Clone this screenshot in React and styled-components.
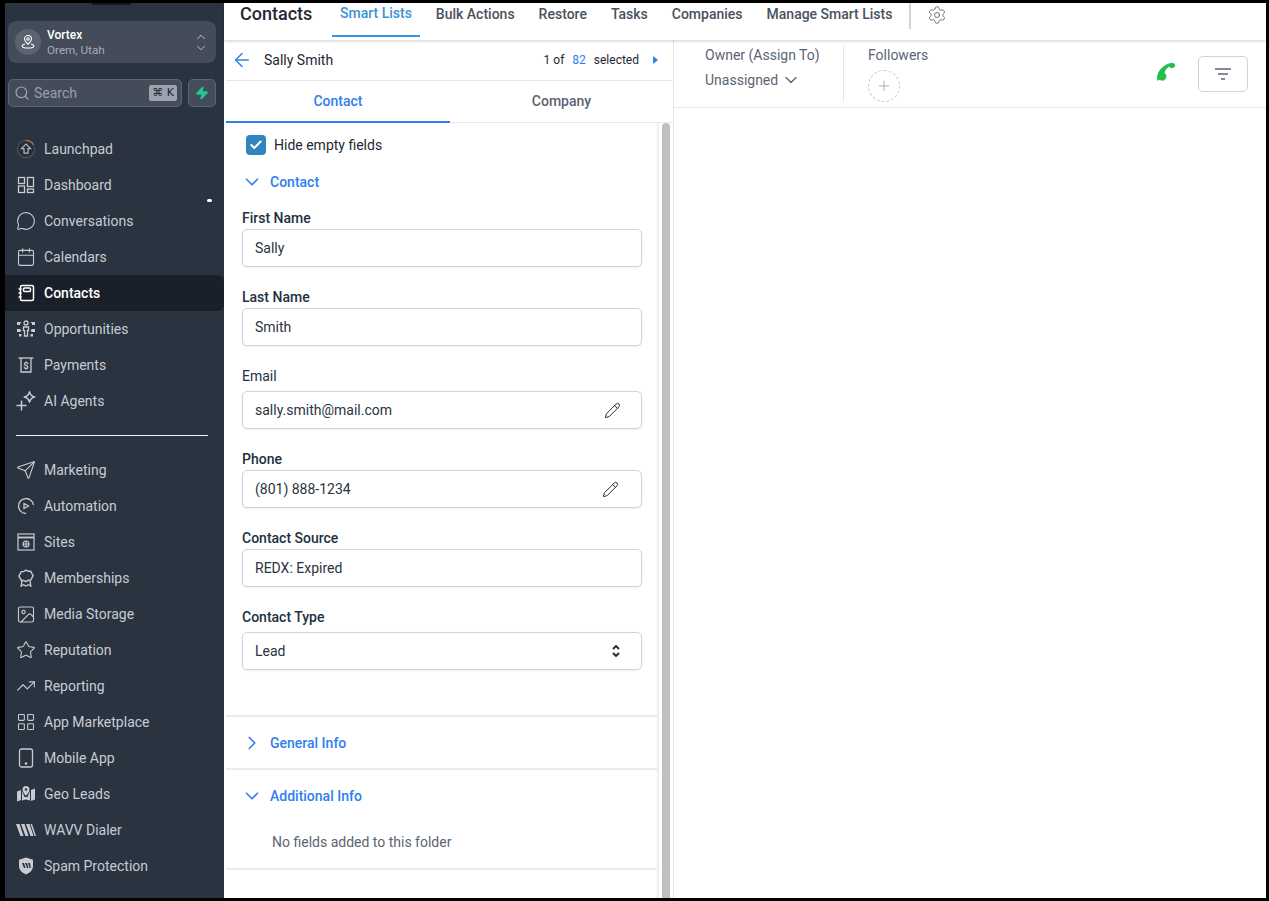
import styled, {createGlobalStyle} from "styled-components";
import {
    ArrowLeft,
    Calendar,
    Check,
    ChevronDown,
    ChevronRight,
    ChevronUp,
    Image,
    LayoutGrid,
    MessageCircle,
    Pencil,
    Plus,
    Search,
    Send,
    Settings,
    Star,
    TrendingUp,
    Zap
} from "lucide-react";

const GlobalStyle = createGlobalStyle`
    html, body {
        margin: 0;
        background: #000;
    }

    * {
        box-sizing: border-box;
    }
`;

const Frame = styled.div`
    width: 1269px;
    height: 901px;
    padding: 3px 3px 3px 5px;
    display: flex;
    overflow: hidden;
    background: #000;
    font-family: Roboto, "Liberation Sans", sans-serif;
`;

const Sidebar = styled.aside`
    position: relative;
    width: 219px;
    flex-shrink: 0;
    background: #2a3340;
    padding-top: 18px;
    color: #c8ccd2;
`;

const Notch = styled.div`
    position: absolute;
    top: 0;
    left: 87px;
    width: 39px;
    height: 2px;
    background: #14181f;
`;

const Dot = styled.div`
    position: absolute;
    top: 196px;
    left: 202px;
    width: 5px;
    height: 3px;
    border-radius: 2px;
    background: #fff;
`;

const LocationCard = styled.div`
    margin: 0 8px 0 3px;
    height: 42px;
    border-radius: 8px;
    background: #444c5a;
    display: flex;
    align-items: center;
    padding: 0 7px;
`;

const LocationAvatar = styled.div`
    width: 26px;
    height: 26px;
    border-radius: 50%;
    background: #5b6370;
    display: flex;
    align-items: center;
    justify-content: center;
    color: #fff;
    margin-right: 6px;
`;

const LocationText = styled.div`
    flex-grow: 1;
    line-height: 15px;
    padding-top: 2px;
`;

const LocationName = styled.div`
    font-size: 12px;
    font-weight: 500;
    color: #fff;
`;

const LocationCity = styled.div`
    font-size: 11.7px;
    color: #a5abb4;
`;

const Stepper = styled.div`
    display: flex;
    flex-direction: column;
    color: #cdd1d6;
    margin-right: 1px;

    svg + svg {
        margin-top: -3px;
    }
`;

const SearchRow = styled.div`
    display: flex;
    gap: 6px;
    margin: 16px 8px 0 3px;
    height: 28px;
`;

const SearchBox = styled.div`
    flex-grow: 1;
    display: flex;
    align-items: center;
    padding: 0 4px 0 5px;
    border-radius: 5px;
    border: 1px solid #5c6472;
    background: #444c5a;
    color: #a5abb4;
    font-size: 14px;
`;

const SearchLabel = styled.span`
    flex-grow: 1;
    margin-left: 4px;
    color: #98a0aa;
`;

const Shortcut = styled.span`
    background: #9ca3af;
    color: #1f2631;
    border-radius: 2px;
    font-size: 11px;
    font-family: "DejaVu Sans", sans-serif;
    padding: 1px 3px;
    line-height: 14px;
`;

const BoltButton = styled.div`
    width: 28px;
    border-radius: 5px;
    border: 1px solid #5c6472;
    background: #444c5a;
    display: flex;
    align-items: center;
    justify-content: center;
    color: #25c48d;
`;

const NavGroup = styled.nav`
    display: flex;
    flex-direction: column;
    margin-top: ${p => p.$top}px;
`;

const NavItem = styled.div`
    height: 36px;
    display: flex;
    align-items: center;
    padding-left: 11px;
    font-size: 14px;
    font-weight: ${p => p.$active ? 500 : 400};
    border-top-right-radius: 6px;
    border-bottom-right-radius: 6px;
    background: ${p => p.$active ? "#1a2029" : "transparent"};
    color: ${p => p.$active ? "#fff" : "#c8ccd2"};
`;

const NavIcon = styled.span`
    width: 20px;
    height: 20px;
    margin-right: 8px;
    display: flex;
    align-items: center;
    justify-content: center;
`;

const NavRule = styled.div`
    height: 1px;
    margin: 16px 16px 16px 11px;
    background: #f1f2f4;
`;

const Main = styled.main`
    flex-grow: 1;
    min-width: 0;
    background: #fff;
    display: flex;
    flex-direction: column;
`;

const TopBar = styled.header`
    height: 37px;
    flex-shrink: 0;
    display: flex;
    align-items: flex-start;
    padding-left: 16px;
    box-shadow: 0 1px 3px rgba(0, 0, 0, 0.2);
    position: relative;
`;

const PageTitle = styled.h1`
    margin: 0 20px 0 0;
    width: 72px;
    font-size: 18px;
    line-height: 21px;
    font-weight: 500;
    color: #1f2733;
`;

const TopTabs = styled.div`
    display: flex;
    gap: 8px;
`;

const TopTab = styled.div`
    height: 34px;
    padding: ${p => p.$active ? "1px" : "2px"} 8px 0;
    font-size: 14px;
    line-height: 18px;
    font-weight: 500;
    white-space: nowrap;
    color: ${p => p.$active ? "#3b93d8" : "#4a525e"};
    border-bottom: 2px solid ${p => p.$active ? "#3b93d8" : "transparent"};
`;

const TopDivider = styled.div`
    width: 2px;
    height: 26px;
    margin: 0 16px 0 9px;
    background: #d3d5d8;
`;

const GearWrap = styled.div`
    margin-top: 2px;
    color: #5f6875;
`;

const Columns = styled.div`
    flex-grow: 1;
    min-height: 0;
    display: flex;
`;

const ContactPanel = styled.section`
    width: 450px;
    flex-shrink: 0;
    display: flex;
    flex-direction: column;
    border-right: 1px solid #e4e7ec;
    padding-left: 2px;
`;

const RecordBar = styled.div`
    height: 41px;
    flex-shrink: 0;
    display: flex;
    align-items: center;
    padding: 0 15px 0 5px;
    border-bottom: 1px solid #e6e8ec;
`;

const RecordName = styled.span`
    margin-left: 11px;
    flex-grow: 1;
    font-size: 14px;
    color: #1f2733;
`;

const Counter = styled.span`
    font-size: 12px;
    color: #1f2733;
`;

const CounterValue = styled.span`
    color: #2f80ed;
    margin: 0 8px;
`;

const NextArrow = styled.span`
    margin-left: 14px;
    width: 0;
    height: 0;
    border-left: 5px solid #2f80ed;
    border-top: 4px solid transparent;
    border-bottom: 4px solid transparent;
`;

const PanelTabs = styled.div`
    height: 42px;
    flex-shrink: 0;
    display: grid;
    grid-template-columns: 224px 1fr;
    border-bottom: 1px solid #e6e8ec;
`;

const PanelTab = styled.div`
    height: 42px;
    display: flex;
    align-items: center;
    justify-content: center;
    font-size: 14px;
    font-weight: 500;
    color: ${p => p.$active ? "#2f80ed" : "#5b6472"};
    border-bottom: 2px solid ${p => p.$active ? "#2f80ed" : "transparent"};
`;

const PanelBody = styled.div`
    flex-grow: 1;
    min-height: 0;
    display: flex;
`;

const FieldsColumn = styled.div`
    width: 433px;
    flex-shrink: 0;
    border-right: 2px solid #eceef1;
`;

const ScrollTrack = styled.div`
    margin-left: 3px;
    width: 8px;
    background: #bfbfbf;
    border-radius: 4px 4px 0 0;
`;

const HideRow = styled.label`
    display: flex;
    align-items: center;
    margin: 12px 0 0 20px;
    height: 20px;
    font-size: 14px;
    color: #1f2733;
`;

const CheckBox = styled.span`
    width: 20px;
    height: 20px;
    margin-right: 8px;
    border-radius: 4px;
    background: #3184bd;
    color: #fff;
    display: flex;
    align-items: center;
    justify-content: center;
`;

const SectionHead = styled.div`
    height: 20px;
    display: flex;
    align-items: center;
    padding-left: 15px;
    font-size: 14px;
    font-weight: 500;
    color: #2f80ed;

    svg {
        margin-right: 7px;
    }
`;

const ContactHead = styled(SectionHead)`
    margin-top: 17px;
`;

const Fields = styled.div`
    padding: 0 15px 0 16px;
    margin-top: 17px;
    height: 508px;
    border-bottom: 2px solid #e9ebee;
`;

const Field = styled.div`
    margin-bottom: 21px;
`;

const FieldLabel = styled.div`
    font-size: 14px;
    line-height: 18px;
    font-weight: ${p => p.$plain ? 400 : 500};
    color: #22313f;
    margin-bottom: ${p => p.$roomy ? "6px" : "2px"};
`;

const InputBox = styled.div`
    height: 38px;
    display: flex;
    align-items: center;
    justify-content: space-between;
    padding: 0 ${p => p.$iconRight || 20}px 0 12px;
    background: #fff;
    border: 1px solid #cfd4dc;
    border-radius: 5px;
    box-shadow: 0 1px 2px rgba(16, 24, 40, 0.08);
    font-size: 14px;
    color: #2b3440;
`;

const Section = styled.div`
    padding: 16px 0;
    height: ${p => p.$height}px;
    border-bottom: 2px solid #e9ebee;
`;

const EmptyNote = styled.div`
    margin: 27px 0 0 46px;
    font-size: 14px;
    line-height: 18px;
    color: #5b6570;
`;

const OwnerPanel = styled.section`
    flex-grow: 1;
    min-width: 0;
`;

const OwnerBar = styled.div`
    height: 68px;
    display: flex;
    padding-left: 31px;
    border-bottom: 1px solid #e6e8ec;
    color: #5b6472;
    font-size: 14px;
`;

const OwnerBlock = styled.div`
    width: 139px;
    margin: 5px 24px 5px 0;
    border-right: 1px solid #e4e7ec;
    line-height: 18px;
    padding-top: 1px;
`;

const OwnerValue = styled.div`
    display: flex;
    align-items: center;
    gap: 3px;
    margin-top: 6px;
`;

const FollowerBlock = styled.div`
    flex-grow: 1;
    padding-top: 6px;
    line-height: 18px;
`;

const AddFollower = styled.div`
    width: 32px;
    height: 32px;
    margin-top: 6px;
    border-radius: 50%;
    border: 1px dashed #c5cad2;
    display: flex;
    align-items: center;
    justify-content: center;
    color: #98a2b3;
`;

const CallIcon = styled.div`
    margin: 21px 20px 0 0;
    height: 22px;
`;

const FilterButton = styled.div`
    width: 50px;
    height: 36px;
    margin: 16px 18px 0 0;
    border: 1px solid #cfd4dc;
    border-radius: 5px;
    display: flex;
    align-items: center;
    justify-content: center;
`;

const PinIcon = () => (
    <svg width="16" height="16" viewBox="0 0 16 16" fill="none" stroke="currentColor" strokeWidth="1.1">
        <path d="M8 1.500a3.500 3.500 0 0 1 3.500 3.500c0 2.200-2 3.700-3.500 5.200-1.500-1.500-3.500-3-3.500-5.200A3.500 3.500 0 0 1 8 1.500z"/>
        <circle cx="8" cy="5" r="1.200"/>
        <path d="M5 10c-1.600.4-2.800 1.100-2.800 1.900 0 1 2.500 2.100 5.800 2.100s5.800-1.100 5.800-2.100c0-.8-1.200-1.500-2.800-1.900"/>
    </svg>
);

const LaunchIcon = () => (
    <svg width="22" height="22" viewBox="0 0 22 22" fill="none" strokeWidth="1.3">
        <circle cx="11" cy="11" r="9.500" stroke="#4b5563" fill="#262e3a"/>
        <path d="M11 1.500a9.500 9.500 0 0 1 8.200 4.700" stroke="#c96f35" strokeWidth="1.500"/>
        <path d="M11 5.500l5 5h-2.800v5H8.800v-5H6z" stroke="#b4b9c1"/>
    </svg>
);

const DashboardIcon = () => (
    <svg width="18" height="18" viewBox="0 0 18 18" fill="none" stroke="currentColor" strokeWidth="1.300">
        <rect x="1.500" y="1.500" width="6" height="6"/>
        <rect x="10.500" y="1.500" width="6" height="9"/>
        <rect x="1.500" y="10" width="6" height="6.500"/>
        <rect x="10.500" y="13" width="6" height="3.500"/>
    </svg>
);

const ContactsIcon = () => (
    <svg width="18" height="18" viewBox="0 0 18 18" fill="none" stroke="currentColor" strokeWidth="1.500">
        <rect x="3.500" y="1.500" width="13" height="15" rx="1.500"/>
        <rect x="6.500" y="4" width="7" height="3.500" rx="1"/>
        <path d="M1.500 5h3M1.500 9h3M1.500 13h3"/>
    </svg>
);

const OpportunitiesIcon = () => (
    <svg width="20" height="18" viewBox="0 0 20 18" fill="currentColor">
        <circle cx="10" cy="3" r="2" fill="none" stroke="currentColor" strokeWidth="1.300"/>
        <path d="M7.500 7h5v3.500h-1V16h-3v-5.500h-1z" fill="none" stroke="currentColor" strokeWidth="1.300"/>
        <path d="M1 2h4.500L4 3.500v1.500H1zM19 2h-4.500L16 3.500v1.500h3z"/>
        <path d="M1 9h3l1.500 1.500L4 12H1zM19 9h-3l-1.500 1.500L16 12h3z"/>
        <path d="M3 14h2.500v2.500H3zM14.500 14H17v2.500h-2.500z"/>
    </svg>
);

const PaymentsIcon = () => (
    <svg width="18" height="18" viewBox="0 0 18 18" fill="none" stroke="currentColor" strokeWidth="1.300">
        <path d="M1.500 2h15"/>
        <path d="M4 2v14h10V2"/>
        <text x="9" y="12.500" fontSize="9.500" fontWeight="700" textAnchor="middle" fill="currentColor" stroke="none">$</text>
    </svg>
);

const AgentsIcon = () => (
    <svg width="20" height="20" viewBox="0 0 20 20" fill="none" stroke="currentColor" strokeWidth="1.500">
        <path d="M13.500 .8c.7 3 2 4.500 5.200 5.200-3.200.7-4.500 2.200-5.200 5.200-.7-3-2-4.500-5.200-5.200 3.200-.7 4.500-2.200 5.200-5.200z" strokeLinejoin="round"/>
        <path d="M5.500 9.500v10M.5 14.500h10"/>
    </svg>
);

const AutomationIcon = () => (
    <svg width="18" height="18" viewBox="0 0 18 18" fill="none" stroke="currentColor" strokeWidth="1.300">
        <path d="M16.500 8A7.500 7.500 0 1 0 9 16.500"/>
        <path d="M7 6.500l4.500 2.500L7 11.500z"/>
    </svg>
);

const SitesIcon = () => (
    <svg width="18" height="18" viewBox="0 0 18 18" fill="none" stroke="currentColor" strokeWidth="1.200">
        <rect x="1" y="1" width="16" height="16"/>
        <path d="M1 4.500h16" strokeWidth="1.800"/>
        <circle cx="9" cy="11" r="3"/>
        <path d="M6 11h6M9 8v6"/>
    </svg>
);

const RibbonIcon = () => (
    <svg width="18" height="18" viewBox="0 0 18 18" fill="none" stroke="currentColor" strokeWidth="1.400">
        <path d="M9 1l2.200 1.200 2.500.1 1.200 2.200 1.200 2.200-1.200 2.200-1.200 2.200-2.500.1L9 12.700l-2.200-1.200-2.500-.1-1.200-2.200-1.200-2.200 1.200-2.200 1.200-2.200 2.500-.1z"/>
        <path d="M5 12l-.8 5 2.400-1.300L9 17l2.400-1.300 2.400 1.300-.8-5"/>
    </svg>
);

const PhoneFrameIcon = () => (
    <svg width="16" height="20" viewBox="0 0 16 20" fill="none" stroke="currentColor" strokeWidth="1.300">
        <rect x="1.500" y="1" width="13" height="18" rx="2"/>
        <circle cx="8" cy="15.500" r=".7" fill="currentColor"/>
    </svg>
);

const GeoIcon = () => (
    <svg width="18" height="16" viewBox="0 0 18 16" fill="currentColor">
        <path d="M0 5.500l4-1.500v10l-4 1.500zM14 4l4-1.500v11L14 15z"/>
        <path d="M5 5l2.500 6h3L13 5v9.500l-4-1-4 1z"/>
        <path fillRule="evenodd" d="M9 0a3.500 3.500 0 0 1 3.500 3.500C12.500 6 9 10 9 10S5.500 6 5.500 3.500A3.500 3.500 0 0 1 9 0zm0 2.300a1.200 1.200 0 1 0 0 2.400 1.200 1.200 0 0 0 0-2.400z"/>
    </svg>
);

const WavvIcon = () => (
    <svg width="20" height="12" viewBox="0 0 20 12" fill="currentColor">
        <path d="M0 0h3.500l4 12H4.500zM5 0h3.500l4 12H9.500zM10 0h3.500l4 12h-3zM14.500 0h1.500l4 12h-1.500z"/>
    </svg>
);

const ShieldIcon = () => (
    <svg width="16" height="18" viewBox="0 0 16 18">
        <path fill="currentColor" d="M8 .5l7 2.300V9c0 4-3.200 7-7 8.500C4.200 16 1 13 1 9V2.800z"/>
        <path fill="#2a3340" d="M4 6h2l1.500 5h-1.500zM7 6h2l1.500 5H9zM10 6h2l.8 5h-1.300z"/>
    </svg>
);

const PhoneIcon = () => (
    <svg width="22" height="22" viewBox="0 0 20 20" fill="#1fc14a" stroke="#1fc14a" strokeWidth=".8" strokeLinejoin="round">
        <path d="M1.500 17.500c-.6-4.500 1.300-9.800 6.400-12.900 2-1.300 4.300-2.300 6.600-2.600.9-.1 2 .2 2.300 1.100.3.800.3 1.700-.2 2.200-1 .8-2.500 1-3.500.5l-.7-.6c-.3-.2-.7-.2-1.100 0-1.800 1.100-3.300 3-3.800 5.100-.1.500 0 .9.400 1.200l.7.500c.7.700.6 2.300.2 3.500-.3 1-1.200 1.800-2.400 1.900-.9.100-2-.2-2.600-.3-.2 0-.3 0-.3-.6z"/>
    </svg>
);

const FilterIcon = () => (
    <svg width="18" height="14" viewBox="0 0 18 14" fill="none" stroke="#5b6472" strokeWidth="1.700">
        <path d="M1 2h16M4 7h10M7 12h4"/>
    </svg>
);

const SelectArrows = () => (
    <svg width="10" height="14" viewBox="0 0 10 14" fill="none" stroke="#1f2733" strokeWidth="1.800">
        <path d="M2 5l3-3 3 3M2 9l3 3 3-3"/>
    </svg>
);

const mainNav = [
    {label: "Launchpad", icon: <LaunchIcon/>},
    {label: "Dashboard", icon: <DashboardIcon/>},
    {label: "Conversations", icon: <MessageCircle size={20} strokeWidth={1.300}/>},
    {label: "Calendars", icon: <Calendar size={20} strokeWidth={1.300}/>},
    {label: "Contacts", icon: <ContactsIcon/>, active: true},
    {label: "Opportunities", icon: <OpportunitiesIcon/>},
    {label: "Payments", icon: <PaymentsIcon/>},
    {label: "AI Agents", icon: <AgentsIcon/>}
];

const toolsNav = [
    {label: "Marketing", icon: <Send size={20} strokeWidth={1.300}/>},
    {label: "Automation", icon: <AutomationIcon/>},
    {label: "Sites", icon: <SitesIcon/>},
    {label: "Memberships", icon: <RibbonIcon/>},
    {label: "Media Storage", icon: <Image size={21} strokeWidth={1.300}/>},
    {label: "Reputation", icon: <Star size={20} strokeWidth={1.300}/>},
    {label: "Reporting", icon: <TrendingUp size={22} strokeWidth={1.300}/>},
    {label: "App Marketplace", icon: <LayoutGrid size={22} strokeWidth={1.300}/>},
    {label: "Mobile App", icon: <PhoneFrameIcon/>},
    {label: "Geo Leads", icon: <GeoIcon/>},
    {label: "WAVV Dialer", icon: <WavvIcon/>},
    {label: "Spam Protection", icon: <ShieldIcon/>}
];

const topTabs = ["Smart Lists", "Bulk Actions", "Restore", "Tasks", "Companies", "Manage Smart Lists"];

const renderNav = (items) => items.map((item) => (
    <NavItem key={item.label} $active={item.active}>
        <NavIcon>{item.icon}</NavIcon>
        {item.label}
    </NavItem>
));

const App = () => {
    return (
        <Frame>
            <GlobalStyle/>
            <Sidebar>
                <Notch/>
                <Dot/>
                <LocationCard>
                    <LocationAvatar><PinIcon/></LocationAvatar>
                    <LocationText>
                        <LocationName>Vortex</LocationName>
                        <LocationCity>Orem, Utah</LocationCity>
                    </LocationText>
                    <Stepper>
                        <ChevronUp size={14} strokeWidth={1.500}/>
                        <ChevronDown size={14} strokeWidth={1.500}/>
                    </Stepper>
                </LocationCard>
                <SearchRow>
                    <SearchBox>
                        <Search size={16} strokeWidth={1.700}/>
                        <SearchLabel>Search</SearchLabel>
                        <Shortcut>⌘ K</Shortcut>
                    </SearchBox>
                    <BoltButton><Zap size={14} fill="currentColor"/></BoltButton>
                </SearchRow>
                <NavGroup $top={24}>{renderNav(mainNav)}</NavGroup>
                <NavRule/>
                <NavGroup $top={0}>{renderNav(toolsNav)}</NavGroup>
            </Sidebar>
            <Main>
                <TopBar>
                    <PageTitle>Contacts</PageTitle>
                    <TopTabs>
                        {topTabs.map((tab, i) => <TopTab key={tab} $active={i === 0}>{tab}</TopTab>)}
                    </TopTabs>
                    <TopDivider/>
                    <GearWrap><Settings size={20} strokeWidth={1.100}/></GearWrap>
                </TopBar>
                <Columns>
                    <ContactPanel>
                        <RecordBar>
                            <ArrowLeft size={22} color="#2f80ed" strokeWidth={1.600}/>
                            <RecordName>Sally Smith</RecordName>
                            <Counter>1 of<CounterValue>82</CounterValue>selected</Counter>
                            <NextArrow/>
                        </RecordBar>
                        <PanelTabs>
                            <PanelTab $active>Contact</PanelTab>
                            <PanelTab>Company</PanelTab>
                        </PanelTabs>
                        <PanelBody>
                            <FieldsColumn>
                                <HideRow>
                                    <CheckBox><Check size={14} strokeWidth={3.500}/></CheckBox>
                                    Hide empty fields
                                </HideRow>
                                <ContactHead><ChevronDown size={22} strokeWidth={1.800}/>Contact</ContactHead>
                                <Fields>
                                    <Field>
                                        <FieldLabel>First Name</FieldLabel>
                                        <InputBox>Sally</InputBox>
                                    </Field>
                                    <Field>
                                        <FieldLabel>Last Name</FieldLabel>
                                        <InputBox>Smith</InputBox>
                                    </Field>
                                    <Field>
                                        <FieldLabel $plain $roomy>Email</FieldLabel>
                                        <InputBox>sally.smith@mail.com<Pencil size={17} strokeWidth={1.400} color="#1f2733"/></InputBox>
                                    </Field>
                                    <Field>
                                        <FieldLabel>Phone</FieldLabel>
                                        <InputBox $iconRight={22}>(801) 888-1234<Pencil size={17} strokeWidth={1.400} color="#1f2733"/></InputBox>
                                    </Field>
                                    <Field>
                                        <FieldLabel>Contact Source</FieldLabel>
                                        <InputBox>REDX: Expired</InputBox>
                                    </Field>
                                    <Field>
                                        <FieldLabel $roomy>Contact Type</FieldLabel>
                                        <InputBox>Lead<SelectArrows/></InputBox>
                                    </Field>
                                </Fields>
                                <Section $height={53}>
                                    <SectionHead><ChevronRight size={22} strokeWidth={1.800}/>General Info</SectionHead>
                                </Section>
                                <Section $height={100}>
                                    <SectionHead><ChevronDown size={22} strokeWidth={1.800}/>Additional Info</SectionHead>
                                    <EmptyNote>No fields added to this folder</EmptyNote>
                                </Section>
                            </FieldsColumn>
                            <ScrollTrack/>
                        </PanelBody>
                    </ContactPanel>
                    <OwnerPanel>
                        <OwnerBar>
                            <OwnerBlock>
                                Owner (Assign To)
                                <OwnerValue>Unassigned <ChevronDown size={20} strokeWidth={1.600}/></OwnerValue>
                            </OwnerBlock>
                            <FollowerBlock>
                                Followers
                                <AddFollower><Plus size={16} strokeWidth={1.300}/></AddFollower>
                            </FollowerBlock>
                            <CallIcon><PhoneIcon/></CallIcon>
                            <FilterButton><FilterIcon/></FilterButton>
                        </OwnerBar>
                    </OwnerPanel>
                </Columns>
            </Main>
        </Frame>
    );
};

export default App;
